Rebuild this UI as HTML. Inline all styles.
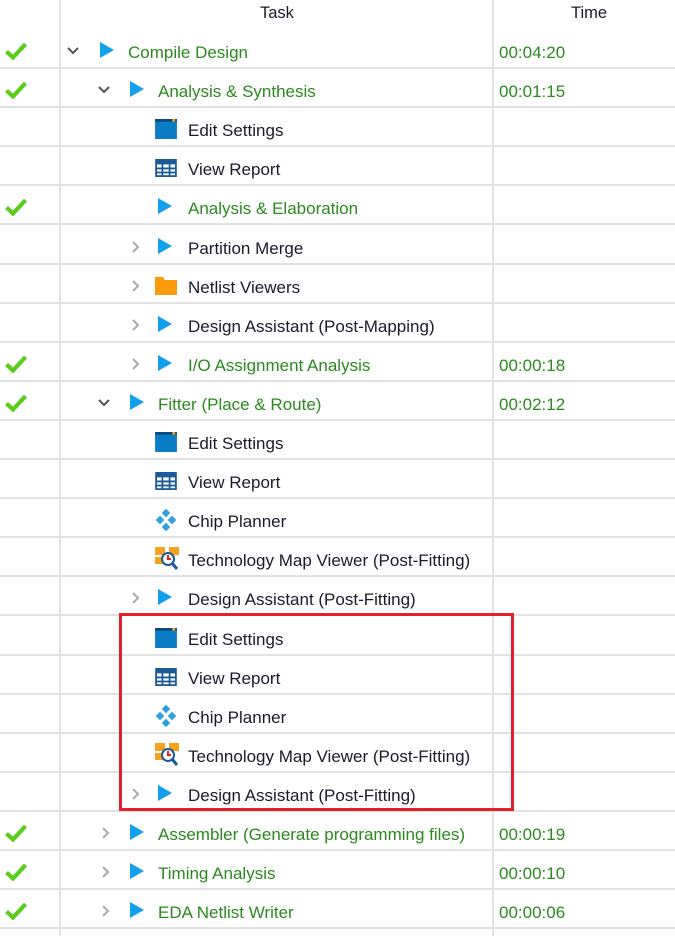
<!DOCTYPE html>
<html><head><meta charset="utf-8"><style>
body{margin:0;width:675px;height:936px;background:#fff;position:relative;overflow:hidden;font-family:"Liberation Sans",sans-serif;font-size:17px;color:#1a1a2a}
.hdr{position:absolute;top:4px;font-size:16.5px}
.vl{position:absolute;top:0;width:2px;height:936px;background:#e2e2e2}
.row{position:absolute;left:0;width:675px;height:39.1px;border-bottom:2px solid #e2e2e2;box-sizing:border-box}
.row>*{position:absolute}
.t{top:13px;white-space:nowrap}
.g{color:#2b8a1e}
.tm{left:499px;top:13px;color:#2b8a1e}
.ck{left:5px}
.cv{top:15px}
.box{position:absolute;left:119px;top:613px;width:395px;height:198px;border:3px solid #e3202b;box-sizing:border-box}
</style></head><body>
<div class="vl" style="left:59px"></div>
<div class="vl" style="left:492px"></div>
<div class="hdr" style="left:260px">Task</div>
<div class="hdr" style="left:571px">Time</div>
<svg width="0" height="0" style="position:absolute">
<defs>
<symbol id="chk" viewBox="0 0 22 18"><path d="M1.5 9.5 L8 15.5 L20.5 2" fill="none" stroke="#5acc1a" stroke-width="4.2"/></symbol>
<symbol id="dn" viewBox="0 0 12 12"><path d="M1 3 L6 8 L11 3" fill="none" stroke="#555" stroke-width="2"/></symbol>
<symbol id="rt" viewBox="0 0 12 12"><path d="M3 1 L8 6 L3 11" fill="none" stroke="#aaa" stroke-width="2"/></symbol>
<symbol id="play" viewBox="0 0 20 20"><path d="M3 1 L17 9 L3 17Z" fill="#12a0ec"/></symbol>
<symbol id="edit" viewBox="0 0 24 22"><rect x="0" y="0" width="24" height="22" fill="#0a7cc4"/><rect x="0" y="0" width="24" height="3" fill="#0b4a80"/><rect x="19" y="0" width="3" height="3" fill="#f7a21a"/></symbol>
<symbol id="rep" viewBox="0 0 24 20"><rect x="1" y="1" width="22" height="18" fill="#fff" stroke="#1a5a96" stroke-width="2"/><rect x="1" y="1" width="22" height="5" fill="#1a5a96"/><path d="M1 10.5H23M1 15H23M8 6V19M16 6V19" stroke="#1a5a96" stroke-width="2"/></symbol>
<symbol id="chip" viewBox="0 0 22 22"><g fill="#2aa0e0"><rect x="8" y="1" width="6" height="6" transform="rotate(45 11 4)"/><rect x="2" y="8" width="6" height="6" transform="rotate(45 5 11)"/><rect x="14" y="8" width="6" height="6" transform="rotate(45 17 11)"/><rect x="8" y="15" width="6" height="6" transform="rotate(45 11 18)"/></g></symbol>
<symbol id="tech" viewBox="0 0 24 24"><rect x="0" y="0" width="10" height="8" fill="#f7a21a"/><rect x="14" y="0" width="10" height="8" fill="#f7a21a"/><rect x="0" y="10" width="8" height="7" fill="#f7a21a"/><circle cx="13" cy="12" r="6" fill="#fff" stroke="#1a5a96" stroke-width="2"/><path d="M13 8V12H16" stroke="#e0202a" stroke-width="2" fill="none"/><path d="M17 16L22 22" stroke="#1a5a96" stroke-width="3"/></symbol>
<symbol id="fold" viewBox="0 0 22 18"><path d="M0 0H8L10 3H22V18H0Z" fill="#fb9a0c"/></symbol>
</defs></svg>

<div id="rows"></div>
<script>
var R=[
[1,'d',0,'play',0,'Compile Design',1,'00:04:20'],
[1,'d',1,'play',1,'Analysis &amp; Synthesis',1,'00:01:15'],
[0,'',2,'edit',2,'Edit Settings',0,''],
[0,'',2,'rep',2,'View Report',0,''],
[1,'',2,'play',2,'Analysis &amp; Elaboration',1,''],
[0,'r',2,'play',2,'Partition Merge',0,''],
[0,'r',2,'fold',2,'Netlist Viewers',0,''],
[0,'r',2,'play',2,'Design Assistant (Post-Mapping)',0,''],
[1,'r',2,'play',2,'I/O Assignment Analysis',1,'00:00:18'],
[1,'d',1,'play',1,'Fitter (Place &amp; Route)',1,'00:02:12'],
[0,'',2,'edit',2,'Edit Settings',0,''],
[0,'',2,'rep',2,'View Report',0,''],
[0,'',2,'chip',2,'Chip Planner',0,''],
[0,'',2,'tech',2,'Technology Map Viewer (Post-Fitting)',0,''],
[0,'r',2,'play',2,'Design Assistant (Post-Fitting)',0,''],
[0,'',2,'edit',2,'Edit Settings',0,''],
[0,'',2,'rep',2,'View Report',0,''],
[0,'',2,'chip',2,'Chip Planner',0,''],
[0,'',2,'tech',2,'Technology Map Viewer (Post-Fitting)',0,''],
[0,'r',2,'play',2,'Design Assistant (Post-Fitting)',0,''],
[1,'r',1,'play',1,'Assembler (Generate programming files)',1,'00:00:19'],
[1,'r',1,'play',1,'Timing Analysis',1,'00:00:10'],
[1,'r',1,'play',1,'EDA Netlist Writer',1,'00:00:06']
];
var cvX=[67,98,128],icX=[97,127,155],txX=[128,158,188];
var iw={play:[20,20],edit:[22,20],rep:[22,18],chip:[22,22],tech:[24,24],fold:[22,18]};
var h='';
R.forEach(function(r,i){
 var top=30+i*39.1;
 h+='<div class="row" style="top:'+top+'px">';
 if(r[0])h+='<svg class="ck" width="22" height="18" style="top:12px"><use href="#chk"/></svg>';
 if(r[1])h+='<svg class="cv" width="12" height="12" style="left:'+(r[1]=='d'?cvX[r[2]]:cvX[r[2]]+2)+'px"><use href="#'+(r[1]=='d'?'dn':'rt')+'"/></svg>';
 var w=iw[r[3]];
 h+='<svg width="'+w[0]+'" height="'+w[1]+'" style="left:'+icX[r[4]]+'px;top:'+(21-w[1]/2)+'px"><use href="#'+r[3]+'"/></svg>';
 h+='<div class="t'+(r[6]?' g':'')+'" style="left:'+txX[r[4]]+'px">'+r[5]+'</div>';
 if(r[7])h+='<div class="tm">'+r[7]+'</div>';
 h+='</div>';
});
h+='<div class="box"></div>';
document.getElementById('rows').innerHTML=h;
</script>
</body></html>
